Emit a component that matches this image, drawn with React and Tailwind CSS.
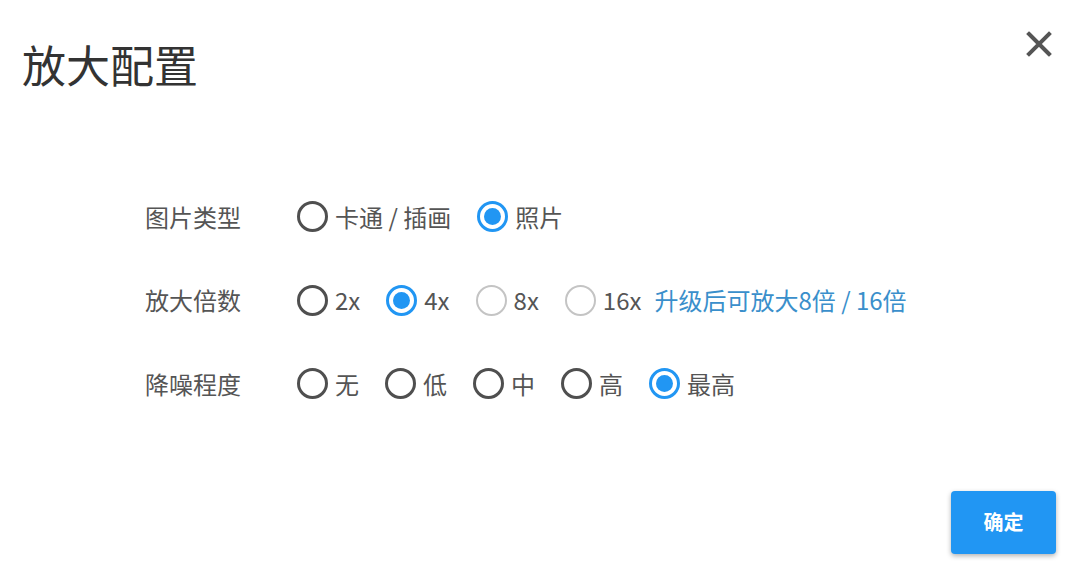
import React, { useState } from 'react'

const FONT = { fontFamily: '"Noto Sans CJK SC", "Noto Sans", sans-serif' }

function Radio({ checked, disabled, label, onClick }) {
  let ring = 'border-[3px] border-[#4f4f4f]'
  if (disabled) ring = 'border-2 border-[#c4c4c4]'
  if (checked) ring = 'border-[3px] border-[#2196f3]'
  return (
    <button
      onClick={disabled ? undefined : onClick}
      className="flex items-center gap-[7px] cursor-pointer"
    >
      <span className={`w-[31px] h-[31px] rounded-full flex items-center justify-center ${ring}`}>
        {checked && <span className="w-[17px] h-[17px] rounded-full bg-[#2196f3]" />}
      </span>
      <span className="text-[24px] leading-none text-[#555]">{label}</span>
    </button>
  )
}

function Row({ label, children }) {
  return (
    <div className="flex items-center h-[83.5px]">
      <div className="w-[152px] text-[24px] leading-none text-[#555]">{label}</div>
      <div className="flex items-center gap-[26px]">{children}</div>
    </div>
  )
}

export default function App() {
  const [type, setType] = useState('photo')
  const [scale, setScale] = useState('4x')
  const [noise, setNoise] = useState('最高')

  return (
    <div className="w-[1080px] h-[578px] bg-white flex flex-col" style={FONT}>
      <div className="flex justify-between items-start pt-[42px] pl-[22px] pr-[28px]">
        <h1 className="text-[44px] leading-none font-normal text-[#333]">放大配置</h1>
        <button className="-mt-[11px]">
          <svg width="26" height="26" viewBox="0 0 26 26">
            <path d="M3 3 L23 23 M23 3 L3 23" stroke="#555" strokeWidth="4" strokeLinecap="square" />
          </svg>
        </button>
      </div>

      <div className="mt-[89px] pl-[145px]">
        <Row label="图片类型">
          <Radio label="卡通 / 插画" checked={type === 'cartoon'} onClick={() => setType('cartoon')} />
          <Radio label="照片" checked={type === 'photo'} onClick={() => setType('photo')} />
        </Row>
        <Row label="放大倍数">
          <Radio label="2x" checked={scale === '2x'} onClick={() => setScale('2x')} />
          <Radio label="4x" checked={scale === '4x'} onClick={() => setScale('4x')} />
          <Radio label="8x" disabled />
          <div className="flex items-center gap-[13px]">
            <Radio label="16x" disabled />
            <span className="text-[24px] leading-none text-[#3a8fcb]">升级后可放大8倍 / 16倍</span>
          </div>
        </Row>
        <Row label="降噪程度">
          {['无', '低', '中', '高', '最高'].map((n) => (
            <Radio key={n} label={n} checked={noise === n} onClick={() => setNoise(n)} />
          ))}
        </Row>
      </div>

      <div className="flex justify-end pr-[24px] mt-[65px]">
        <button className="w-[105px] h-[63px] rounded-[4px] bg-[#2196f3] text-white text-[20px] font-bold shadow-[0_2px_5px_rgba(0,0,0,0.3)]">
          确定
        </button>
      </div>
    </div>
  )
}
